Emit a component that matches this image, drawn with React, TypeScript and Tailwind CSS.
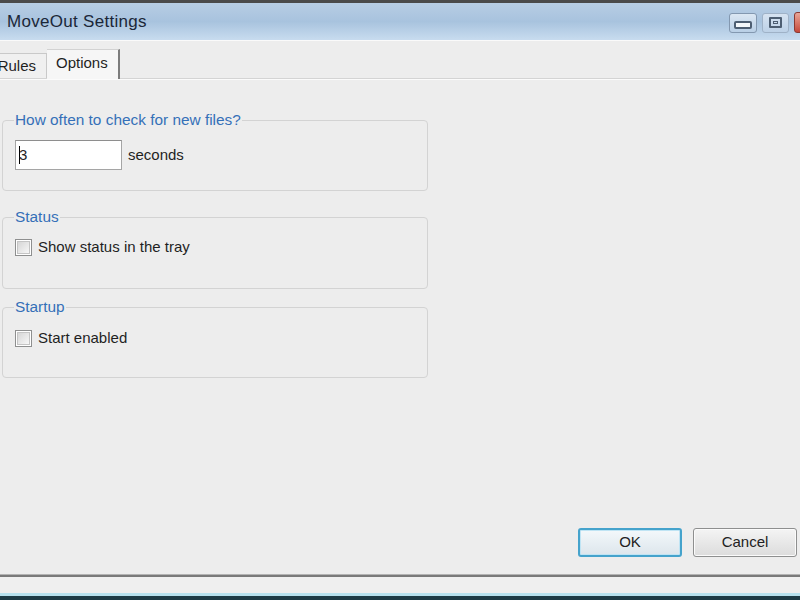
import React from "react";

function Checkbox() {
  return (
    <span className="flex w-[17px] h-[17px] shrink-0 items-center justify-center border border-[#8e8f8f] bg-white">
      <span className="block w-[13px] h-[13px] border border-[#c4c4c4] bg-gradient-to-br from-[#d6d6d6] to-[#f7f7f7]" />
    </span>
  );
}

function Group({ title, className, children }: { title: string; className: string; children: React.ReactNode }) {
  return (
    <fieldset className={`ml-[2px] w-[426px] rounded-[4px] border border-[#d3d3d3] pl-[12px] pr-3 ${className}`}>
      <legend className="px-[1px] -ml-[1px] text-[15.4px] leading-[16px] text-[#3570b8]">{title}</legend>
      {children}
    </fieldset>
  );
}

export default function App() {
  return (
    <div
      className="w-[800px] h-[600px] bg-[#ededed] flex flex-col overflow-hidden text-[#1f1f1f]"
      style={{ fontFamily: '"Liberation Sans", Arial, sans-serif' }}
    >
      <div className="h-[3px] bg-[#4a4a4a]" />

      {/* Title bar */}
      <div className="h-[37px] flex items-center pl-[7px] bg-gradient-to-b from-[#b7cde4] via-[#a8c3de] to-[#c8dcef]">
        <span className="text-[17px] text-[#1b2738] tracking-[0.3px]">MoveOut Settings</span>
        <div className="ml-auto flex items-center gap-[5px] -mr-[6px] mt-[2px]">
          <div className="w-[28px] h-[20px] rounded-[3px] border border-[#8398b0] bg-gradient-to-b from-[#dbe7f3] to-[#b9cfe6] flex items-end justify-center pb-[3px]">
            <span className="block w-[18px] h-[8px] rounded-[2px] border-2 border-[#4d5e72] bg-[#f4f7fa]" />
          </div>
          <div className="w-[27px] h-[20px] rounded-[3px] border border-[#9fb2c7] bg-gradient-to-b from-[#d6e3f1] to-[#bcd1e7] flex items-center justify-center">
            <span className="flex w-[13px] h-[11px] items-center justify-center rounded-[1px] border-2 border-[#4d5e72]">
              <span className="block w-[5px] h-[3px] border border-[#4d5e72]" />
            </span>
          </div>
          <div className="w-[12px] h-[21px] rounded-l-[3px] border border-[#8a3a32] bg-gradient-to-b from-[#e8a597] to-[#c4473a]" />
        </div>
      </div>
      <div className="h-px bg-[#fafafa]" />

      {/* Tabs */}
      <div className="h-[38px] flex items-end border-b border-[#d4d4d4]">
        <div className="h-[25px] w-[47px] flex items-center justify-end pr-[10px] border-r border-t border-[#c9c9c9] bg-[#f0f0f0] text-[15px]">
          Rules
        </div>
        <div className="h-[30px] w-[73px] flex items-center pl-[9px] border-t border-[#d2d2d2] border-r-2 border-r-[#7c7c7c] bg-[#f6f6f6] text-[15px] -mb-px pb-[3px]">
          Options
        </div>
      </div>
      <div className="h-px bg-[#fbfbfb]" />

      {/* Content */}
      <div className="flex-1 flex flex-col">
        <Group title="How often to check for new files?" className="mt-[32px] h-[79px]">
          <div className="flex items-center pt-[12px]">
            <div className="w-[107px] h-[30px] bg-white border border-[#a5a5a5] border-t-[#8e8e8e] flex items-center pl-[3px] text-[15px]">
              <span className="block w-px h-[18px] bg-black" />
              <span className="-ml-[1px]">3</span>
            </div>
            <span className="ml-[6px] text-[15px]">seconds</span>
          </div>
        </Group>

        <Group title="Status" className="mt-[18px] h-[80px]">
          <label className="flex items-center gap-[6px] pt-[11px] text-[15px]">
            <Checkbox />
            <span>Show status in the tray</span>
          </label>
        </Group>

        <Group title="Startup" className="mt-[10px] h-[79px]">
          <label className="flex items-center gap-[6px] pt-[12px] text-[15px]">
            <Checkbox />
            <span>Start enabled</span>
          </label>
        </Group>

        <div className="mt-auto flex justify-end gap-[11px] pr-[3px] pb-[17px]">
          <button className="w-[104px] h-[29px] rounded-[3px] border-2 border-[#45a3cc] bg-gradient-to-b from-[#f3f8fb] to-[#dde6ec] text-[15px] text-[#222] shadow-[inset_0_0_0_1px_#bfe4f4]">
            OK
          </button>
          <button className="w-[104px] h-[29px] rounded-[3px] border border-[#8e8f8f] bg-gradient-to-b from-[#f4f4f4] to-[#dcdcdc] text-[15px] text-[#222] shadow-[inset_0_0_0_1px_#fbfbfb]">
            Cancel
          </button>
        </div>
      </div>

      {/* Bottom edge */}
      <div className="h-px bg-[#b3b3b3]" />
      <div className="h-[2px] bg-[#7a7a7a]" />
      <div className="h-[16px] bg-[#efefef]" />
      <div className="h-[3px] bg-[#b7e2ee]" />
      <div className="h-[4px] bg-[#1d3b45]" />
    </div>
  );
}
